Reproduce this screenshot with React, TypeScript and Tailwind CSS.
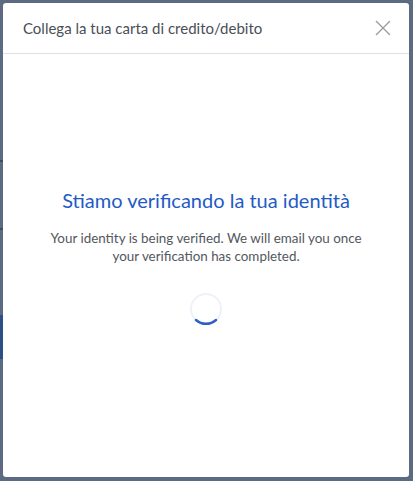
export default function App() {
  return (
    <div className="flex h-[481px] w-[413px] overflow-hidden bg-[#5c6b82] font-['Lato','Noto_Sans',sans-serif]">
      {/* page behind the overlay: only the left edge shows */}
      <div className="flex w-[3px] shrink-0 flex-col">
        <div className="h-[160px]" />
        <div className="h-[2px] bg-[#3f4c60]" />
        <div className="h-[66px]" />
        <div className="h-[2px] bg-[#3f4c60]" />
        <div className="h-[85px]" />
        <div className="h-[44px] bg-[#2c4f88]" />
      </div>

      <div className="my-[3px] flex h-[474px] w-[406px] flex-col rounded-[3px] bg-white">
        <header className="flex h-[51px] shrink-0 items-center justify-between border-b border-[#dde1e6] pl-[20px] pr-[18px]">
          <h1 className="text-[15px] text-[#4a4f57]">Collega la tua carta di credito/debito</h1>
          <svg width="16" height="16" viewBox="0 0 16 16" className="text-[#9a9ea4]">
            <path d="M1 1L15 15M15 1L1 15" stroke="currentColor" strokeWidth="1.4" fill="none" />
          </svg>
        </header>

        <div className="flex flex-1 flex-col items-center px-[20px] pt-[131px] text-center">
          <h2 className="text-[20px] text-[#1f5bc5]">Stiamo verificando la tua identità</h2>
          <p className="mt-[14px] text-[13.4px] leading-[18px] text-[#53575e]">
            Your identity is being verified. We will email you once
            <br />
            your verification has completed.
          </p>
          <svg width="34" height="34" viewBox="0 0 34 34" className="mt-[27px]">
            <circle cx="17" cy="17" r="15" stroke="#eef1f8" strokeWidth="2" fill="none" />
            <path d="M7 28 A15 15 0 0 0 27 28" stroke="#2d5fc4" strokeWidth="2.5" strokeLinecap="round" fill="none" />
          </svg>
        </div>
      </div>
    </div>
  );
}
